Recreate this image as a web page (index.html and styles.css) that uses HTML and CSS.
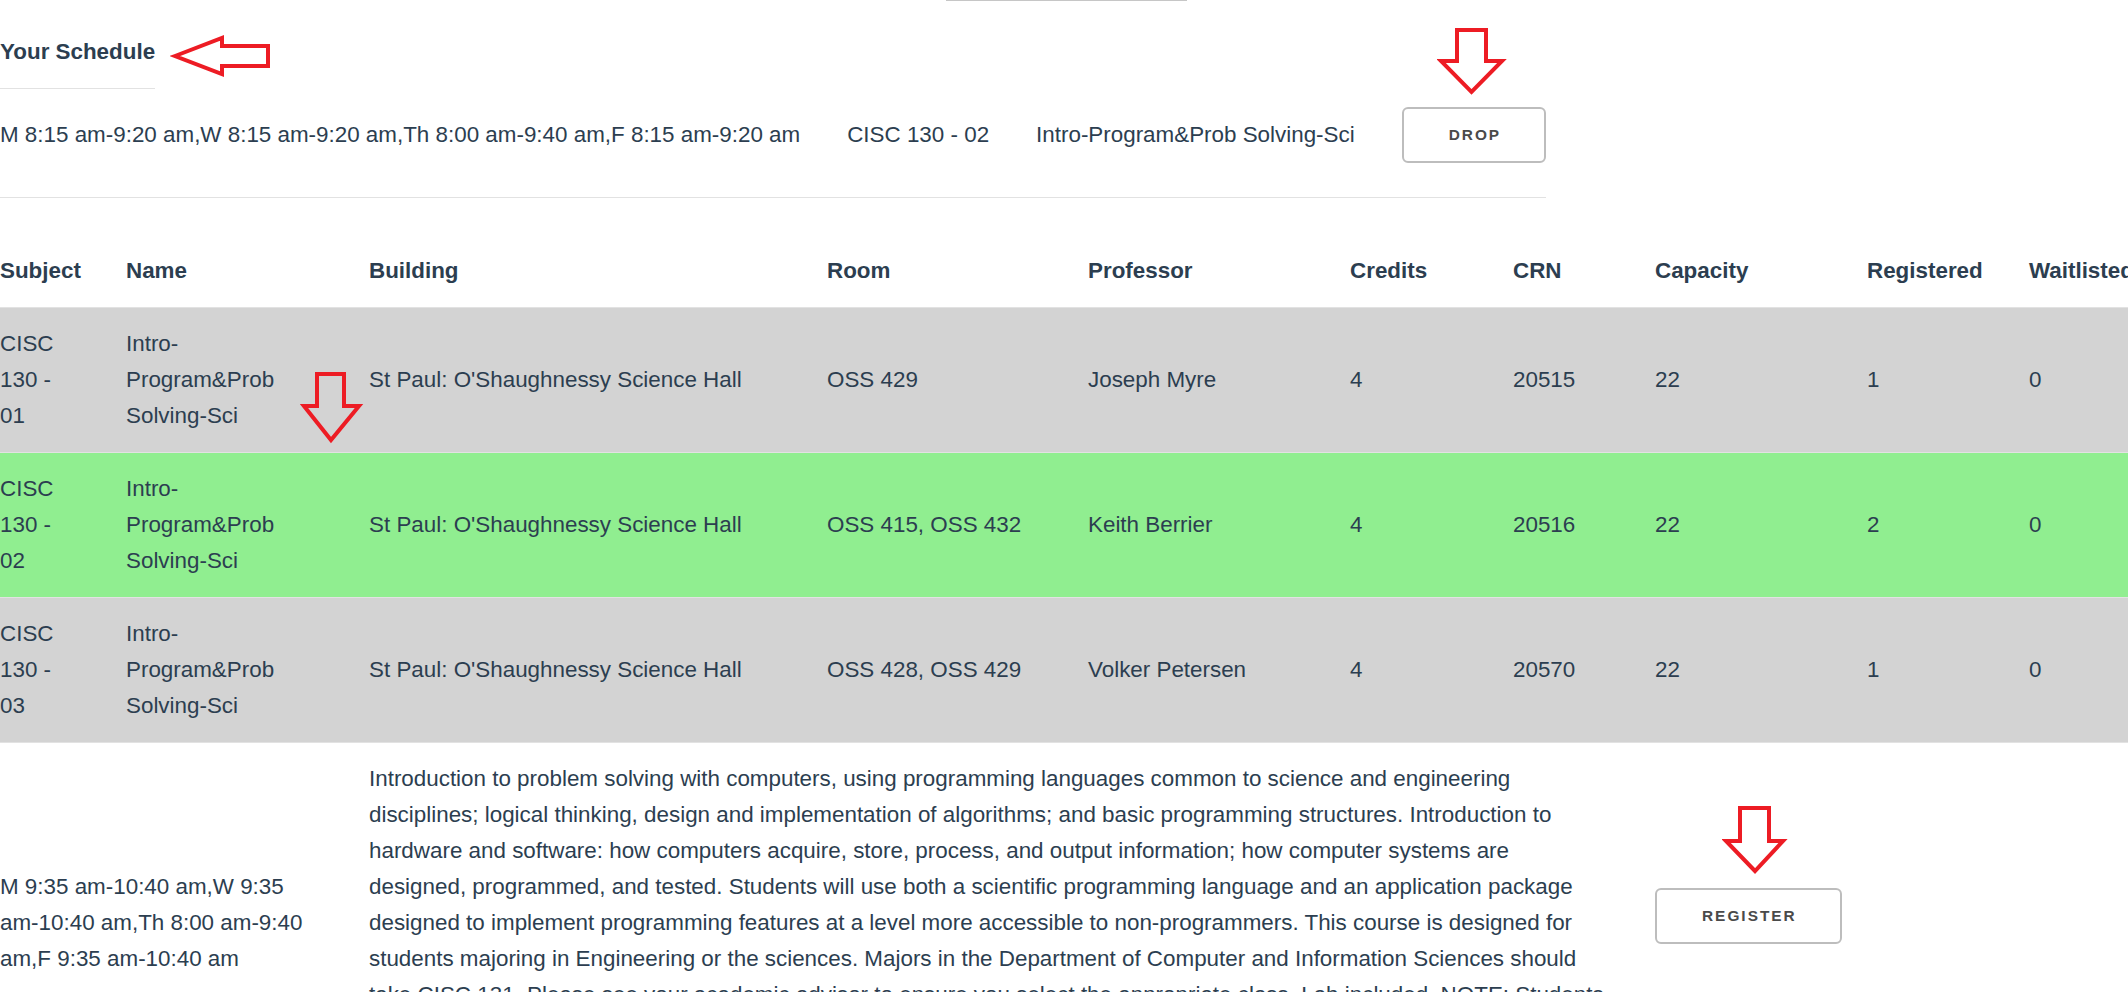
FILE: index.html
```html
<!DOCTYPE html>
<html lang="en">
<head>
<meta charset="utf-8">
<title>Your Schedule</title>
<link rel="stylesheet" href="styles.css">
</head>
<body>
<div class="top-rule"></div>

<section class="schedule">
  <h2 class="schedule-title">Your Schedule</h2>
  <div class="schedule-row">
    <span class="sched-time">M 8:15 am-9:20 am,W 8:15 am-9:20 am,Th 8:00 am-9:40 am,F 8:15 am-9:20 am</span>
    <span class="sched-course">CISC 130 - 02</span>
    <span class="sched-name">Intro-Program&amp;Prob Solving-Sci</span>
    <button class="btn" type="button">Drop</button>
  </div>
</section>

<div class="table-wrap">
  <table class="courses">
    <thead>
      <tr>
        <th class="c-subject">Subject</th>
        <th class="c-name">Name</th>
        <th class="c-building">Building</th>
        <th class="c-room">Room</th>
        <th class="c-prof">Professor</th>
        <th class="c-credits">Credits</th>
        <th class="c-crn">CRN</th>
        <th class="c-cap">Capacity</th>
        <th class="c-reg">Registered</th>
        <th class="c-wait">Waitlisted</th>
      </tr>
    </thead>
    <tbody>
      <tr class="row-gray">
        <td>CISC 130 - 01</td>
        <td>Intro-Program&amp;Prob Solving-Sci</td>
        <td>St Paul: O'Shaughnessy Science Hall</td>
        <td>OSS 429</td>
        <td>Joseph Myre</td>
        <td>4</td>
        <td>20515</td>
        <td>22</td>
        <td>1</td>
        <td>0</td>
      </tr>
      <tr class="row-green">
        <td>CISC 130 - 02</td>
        <td>Intro-Program&amp;Prob Solving-Sci</td>
        <td>St Paul: O'Shaughnessy Science Hall</td>
        <td>OSS 415, OSS 432</td>
        <td>Keith Berrier</td>
        <td>4</td>
        <td>20516</td>
        <td>22</td>
        <td>2</td>
        <td>0</td>
      </tr>
      <tr class="row-gray">
        <td>CISC 130 - 03</td>
        <td>Intro-Program&amp;Prob Solving-Sci</td>
        <td>St Paul: O'Shaughnessy Science Hall</td>
        <td>OSS 428, OSS 429</td>
        <td>Volker Petersen</td>
        <td>4</td>
        <td>20570</td>
        <td>22</td>
        <td>1</td>
        <td>0</td>
      </tr>
      <tr class="row-detail">
        <td colspan="2" class="detail-time">M 9:35 am-10:40 am,W 9:35 am-10:40 am,Th 8:00 am-9:40 am,F 9:35 am-10:40 am</td>
        <td colspan="5" class="detail-desc">Introduction to problem solving with computers, using programming languages common to science and engineering disciplines; logical thinking, design and implementation of algorithms; and basic programming structures. Introduction to hardware and software: how computers acquire, store, process, and output information; how computer systems are designed, programmed, and tested. Students will use both a scientific programming language and an application package designed to implement programming features at a level more accessible to non-programmers. This course is designed for students majoring in Engineering or the sciences. Majors in the Department of Computer and Information Sciences should take CISC 131. Please see your academic advisor to ensure you select the appropriate class. Lab included. NOTE: Students who have received credit for CISC 131 may not receive credit for CISC 130. Students must register for the lecture and the lab section listed with it. Prerequisite: MATH 100 or placement into MATH 108 or higher.</td>
        <td colspan="3" class="detail-action"><button class="btn btn-register" type="button">Register</button></td>
      </tr>
    </tbody>
  </table>
</div>

<svg class="mark mark-left" width="104" height="46" viewBox="0 0 104 46" aria-hidden="true">
  <polygon points="5,23 52,5 52,13 98,13 98,33 52,33 52,41"/>
</svg>
<svg class="mark mark-drop" width="70" height="70" viewBox="0 0 70 70" aria-hidden="true">
  <polygon points="20,4 49,4 49,35 65,35 34.5,66 4,35 20,35"/>
</svg>
<svg class="mark mark-row" width="64" height="75" viewBox="0 0 64 75" aria-hidden="true">
  <polygon points="17,4 44,4 44,36 59,36 31,70 4,36 17,36"/>
</svg>
<svg class="mark mark-register" width="66" height="72" viewBox="0 0 66 72" aria-hidden="true">
  <polygon points="18,4 47,4 47,37 61,37 33,67 4,37 18,37"/>
</svg>
</body>
</html>
```

FILE: styles.css
```css
html {
  scrollbar-width: none;
}

body {
  margin: 0;
  font-family: "Liberation Sans", Arial, sans-serif;
  font-size: 22.4px;
  line-height: 36px;
  color: #2c3e50;
  background: #fff;
  overflow-x: hidden;
}

.top-rule {
  margin-left: 946px;
  width: 241px;
  height: 1px;
  background: #c6c6c6;
}

.schedule {
  width: fit-content;
  margin-top: 33px;
  border-bottom: 1px solid #e2e2e2;
}

.schedule-title {
  width: fit-content;
  margin: 0;
  padding-bottom: 18px;
  font-size: 22.4px;
  line-height: 36px;
  font-weight: bold;
  border-bottom: 1px solid #e2e2e2;
}

.schedule-row {
  display: flex;
  align-items: center;
  gap: 47px;
  padding: 18px 0 34px;
}

.btn {
  height: 56px;
  padding: 0 43px 0 45px;
  border: 2px solid #bdbdbd;
  border-radius: 6px;
  background: #fff;
  color: #4a4a4a;
  font-family: "Liberation Sans", Arial, sans-serif;
  font-size: 15.4px;
  font-weight: bold;
  letter-spacing: 2px;
  text-transform: uppercase;
  cursor: pointer;
}

.btn-register {
  margin-bottom: 14px;
}

.table-wrap {
  margin-top: 37px;
  width: 100%;
  overflow: hidden;
}

.courses {
  table-layout: fixed;
  border-collapse: collapse;
  width: 2199px;
}

.courses th,
.courses td {
  box-sizing: border-box;
  padding: 18px 46px 18px 0;
  text-align: left;
  vertical-align: middle;
}

.courses th {
  font-weight: bold;
  border-bottom: 1px solid #e2e2e2;
}

.courses td {
  border-top: 1px solid #e2e2e2;
}

.c-subject { width: 126px; }
.c-name { width: 243px; }
.c-building { width: 458px; }
.c-room { width: 261px; }
.c-prof { width: 262px; }
.c-credits { width: 163px; }
.c-crn { width: 142px; }
.c-cap { width: 212px; }
.c-reg { width: 162px; }
.c-wait { width: 170px; }

.row-gray { background: #d3d3d3; }
.row-green { background: #90ee90; }
.row-detail { background: #fff; }

.detail-time,
.detail-action {
  vertical-align: middle;
}

.detail-desc {
  vertical-align: top;
}

.mark {
  position: absolute;
  fill: none;
  stroke: #ed1c24;
  stroke-width: 4;
  stroke-linejoin: miter;
}

.mark-left { left: 170px; top: 33px; }
.mark-drop { left: 1437px; top: 26px; }
.mark-row { left: 300px; top: 370px; }
.mark-register { left: 1722px; top: 804px; }
```
